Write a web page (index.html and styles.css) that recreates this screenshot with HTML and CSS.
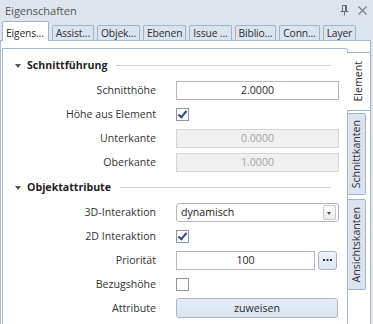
FILE: index.html
```html
<!DOCTYPE html>
<html lang="de">
<head>
    <meta charset="UTF-8" />
    <meta name="viewport" content="width=device-width, initial-scale=1" />
    <title>Eigenschaften</title>
    <link rel="stylesheet" href="styles.css">
</head>
<body>
    <div class="titlebar">
        <span class="title">Eigenschaften</span>
        <span class="title-icons">
            <svg class="pin" width="9" height="11" viewBox="0 0 9 11">
                <path d="M2.5 0.5h4v6h-4z M0.5 6.5h8 M4.5 6.5v4 M5.5 1v5" fill="none" stroke="#6a6a6a" stroke-width="1"/>
            </svg>
            <svg class="close" width="9" height="9" viewBox="0 0 9 9">
                <path d="M0.5 0.5l8 8 M8.5 0.5l-8 8" fill="none" stroke="#7a7a7a" stroke-width="1.1"/>
            </svg>
        </span>
    </div>
    <div class="tabs">
        <div class="tab active">Eigens...</div>
        <div class="tab">Assist...</div>
        <div class="tab">Objek...</div>
        <div class="tab">Ebenen</div>
        <div class="tab">Issue ...</div>
        <div class="tab">Biblio...</div>
        <div class="tab">Conn...</div>
        <div class="tab">Layer</div>
    </div>
    <div class="pane">
        <div class="panel">
            <div class="section-head">
                <span class="caret"></span>
                <span class="section-title">Schnittführung</span>
                <span class="rule"></span>
            </div>
            <div class="grid">
                <div class="label">Schnitthöhe</div>
                <div class="cell"><div class="field">2.0000</div></div>

                <div class="label">Höhe aus Element</div>
                <div class="cell"><span class="check checked"></span></div>

                <div class="label">Unterkante</div>
                <div class="cell"><div class="field disabled">0.0000</div></div>

                <div class="label">Oberkante</div>
                <div class="cell"><div class="field disabled">1.0000</div></div>
            </div>

            <div class="section-head">
                <span class="caret"></span>
                <span class="section-title">Objektattribute</span>
                <span class="rule"></span>
            </div>
            <div class="grid">
                <div class="label">3D-Interaktion</div>
                <div class="cell">
                    <div class="combo">
                        <span class="combo-text">dynamisch</span>
                        <span class="combo-btn"></span>
                    </div>
                </div>

                <div class="label">2D Interaktion</div>
                <div class="cell"><span class="check checked"></span></div>

                <div class="label">Priorität</div>
                <div class="cell">
                    <div class="field">100</div>
                    <button class="dots-btn">
                        <svg width="9" height="2" viewBox="0 0 9 2">
                            <path d="M0 0h2v2h-2z M3.5 0h2v2h-2z M7 0h2v2h-2z" fill="#333"/>
                        </svg>
                    </button>
                </div>

                <div class="label">Bezugshöhe</div>
                <div class="cell"><span class="check"></span></div>

                <div class="label">Attribute</div>
                <div class="cell"><button class="assign-btn">zuweisen</button></div>
            </div>
        </div>
        <div class="vtabs">
            <div class="vtab active"><span>Element</span></div>
            <div class="vtab"><span>Schnittkanten</span></div>
            <div class="vtab"><span>Ansichtskanten</span></div>
        </div>
    </div>
</body>
</html>
```

FILE: styles.css
```css
html, body {
    margin: 0;
    width: 373px;
    height: 324px;
    overflow: hidden;
}
body {
    background: #dde4ee;
    font-family: 'Open Sans', 'Noto Sans', sans-serif;
    font-size: 10.6px;
    color: #333;
    display: flex;
    flex-direction: column;
}
.titlebar {
    height: 20px;
    display: flex;
    align-items: center;
    justify-content: space-between;
    padding: 0 6px 0 5px;
    flex-shrink: 0;
}
.title {
    color: #555;
    font-size: 11px;
}
.title-icons {
    display: flex;
    align-items: center;
    gap: 9px;
}
.pin { margin-top: 1px; }
.tabs {
    height: 20px;
    display: flex;
    align-items: flex-end;
    gap: 3px;
    padding-left: 2px;
    flex-shrink: 0;
    position: relative;
    z-index: 2;
}
.tab {
    height: 14px;
    line-height: 14px;
    padding: 0 3px;
    background: #dbe3ef;
    border: 1px solid #a3b4ca;
    border-bottom: none;
    border-radius: 2px 2px 0 0;
    color: #2e2e2e;
    white-space: nowrap;
    font-size: 10.3px;
    letter-spacing: -0.15px;
}
.tab.active {
    height: 19px;
    line-height: 22px;
    background: #fff;
    margin-bottom: -1px;
    padding: 0 4px 0 3px;
}
.pane {
    flex: 1;
    display: flex;
    margin-right: 2px;
    padding: 7px 0 0 1px;
    background: #fff;
    border: 1px solid #a9b9cf;
    border-bottom: none;
    min-height: 0;
}
.panel {
    width: 344px;
    border: 1px solid #a9b9cf;
    border-bottom: none;
    border-radius: 0 3px 0 0;
    padding-top: 3px;
    flex-shrink: 0;
}
.section-head {
    height: 26px;
    display: flex;
    align-items: center;
    padding-left: 12px;
    padding-right: 16px;
}
.caret {
    width: 0;
    height: 0;
    border-left: 3.5px solid transparent;
    border-right: 3.5px solid transparent;
    border-top: 4px solid #555;
    margin-right: 6px;
    margin-top: 1px;
}
.section-title {
    font-weight: bold;
    color: #1f1f1f;
}
.rule {
    flex: 1;
    height: 1px;
    background: #d2d2d2;
    margin-left: 9px;
    margin-top: 1px;
}
.grid {
    display: grid;
    grid-template-columns: 153px 163px;
    grid-auto-rows: 24px;
    column-gap: 20px;
    align-items: center;
}
.label {
    text-align: right;
    color: #333;
    white-space: nowrap;
}
.cell {
    display: flex;
    align-items: center;
    gap: 2px;
    height: 24px;
}
.field {
    flex: 1;
    height: 17px;
    line-height: 17px;
    border: 1px solid #b2b6bd;
    background: #fff;
    text-align: center;
    color: #262626;
}
.field.disabled {
    background: #f0f0f0;
    border-color: #d6d6d6;
    color: #a3a3a3;
}
.check {
    width: 11px;
    height: 11px;
    border: 1px solid #8d96a3;
    background: #fff;
    position: relative;
}
.check.checked::after {
    content: '';
    position: absolute;
    left: 3px;
    top: 0px;
    width: 3px;
    height: 7px;
    border-right: 2px solid #2c4a86;
    border-bottom: 2px solid #2c4a86;
    transform: rotate(40deg);
}
.combo {
    flex: 1;
    height: 17px;
    border: 1px solid #b2b6bd;
    border-radius: 3px;
    background: #fff;
    display: flex;
    align-items: center;
    padding: 0 2px 0 4px;
}
.combo-text {
    flex: 1;
    color: #262626;
}
.combo-btn {
    width: 11px;
    height: 13px;
    border: 1px solid #c9c9c9;
    border-radius: 2px;
    background: linear-gradient(#fbfbfb, #ececec);
    position: relative;
}
.combo-btn::after {
    content: '';
    position: absolute;
    left: 3px;
    top: 6px;
    border-left: 2.5px solid transparent;
    border-right: 2.5px solid transparent;
    border-top: 3px solid #555;
}
.dots-btn {
    width: 19px;
    height: 19px;
    padding: 0;
    margin-left: 1px;
    margin-right: 2px;
    border: 1px solid #a9b5c6;
    border-radius: 3px;
    background: linear-gradient(#eef2f8, #dfe6f0);
    display: flex;
    align-items: center;
    justify-content: center;
}
.assign-btn {
    flex: 1;
    height: 20px;
    padding: 0;
    margin-right: 1px;
    border: 1px solid #a9b7cb;
    border-radius: 3px;
    background: linear-gradient(#e6ecf5, #dae3ef);
    font-family: inherit;
    font-size: 10.6px;
    color: #2a2a2a;
}
.vtabs {
    display: flex;
    flex-direction: column;
    gap: 2px;
    padding-top: 4px;
    width: 22px;
}
.vtab {
    width: 17px;
    padding: 6px 0;
    background: #dbe3ef;
    border: 1px solid #a3b4ca;
    border-left: none;
    border-radius: 0 2px 2px 0;
    display: flex;
    justify-content: center;
    color: #2e2e2e;
}
.vtab span {
    writing-mode: vertical-rl;
    transform: rotate(180deg);
    white-space: nowrap;
    line-height: 17px;
}
.vtab.active {
    width: 23px;
    margin-left: -1px;
    background: #fff;
    padding: 8px 0;
}
.vtab + .vtab + .vtab {
    margin-top: 2px;
    padding: 7px 0;
}
```
